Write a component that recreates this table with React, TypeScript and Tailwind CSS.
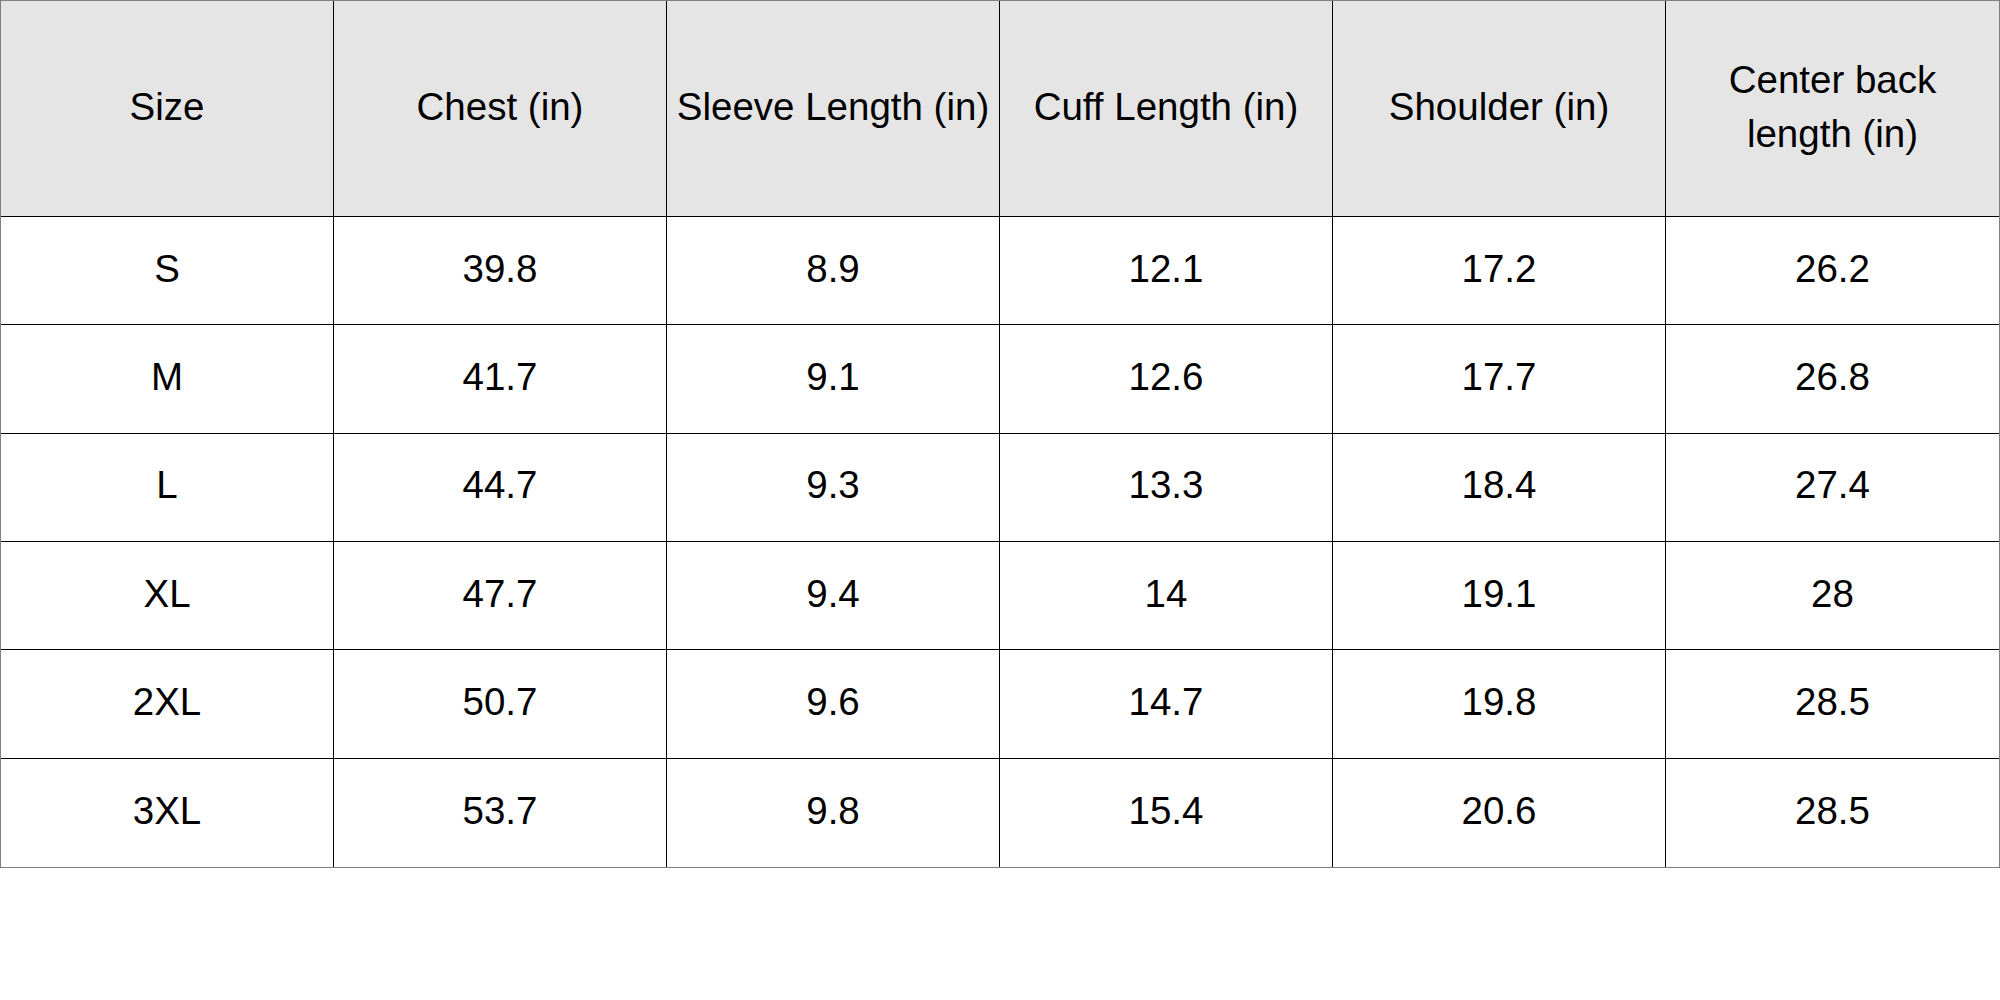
import React from "react";

const headers = [
  "Size",
  "Chest (in)",
  "Sleeve Length (in)",
  "Cuff Length (in)",
  "Shoulder (in)",
  "Center back length (in)",
];

const rows: string[][] = [
  ["S", "39.8", "8.9", "12.1", "17.2", "26.2"],
  ["M", "41.7", "9.1", "12.6", "17.7", "26.8"],
  ["L", "44.7", "9.3", "13.3", "18.4", "27.4"],
  ["XL", "47.7", "9.4", "14", "19.1", "28"],
  ["2XL", "50.7", "9.6", "14.7", "19.8", "28.5"],
  ["3XL", "53.7", "9.8", "15.4", "20.6", "28.5"],
];

export default function App() {
  return (
    <div className="w-[2000px] h-[1000px] bg-white" style={{ fontFamily: '"Liberation Sans", Arial, sans-serif' }}>
      <div className="w-[2000px] border border-[#808080] grid grid-cols-6 grid-rows-[216px_repeat(6,108.33px)] text-black text-[38.5px] leading-[54px]">
        {headers.map((h, i) => (
          <div
            key={h}
            className={
              "flex items-center justify-center text-center px-[6px] pb-[4px] bg-[#e5e5e5] border-b border-black " +
              (i < 5 ? "border-r" : "")
            }
          >
            {h}
          </div>
        ))}
        {rows.map((r, ri) =>
          r.map((c, ci) => (
            <div
              key={ri + "-" + ci}
              className={
                "flex items-center justify-center text-center px-[6px] pb-[4px] border-black " +
                (ci < 5 ? "border-r " : "") +
                (ri < 5 ? "border-b" : "")
              }
            >
              {c}
            </div>
          ))
        )}
      </div>
    </div>
  );
}
